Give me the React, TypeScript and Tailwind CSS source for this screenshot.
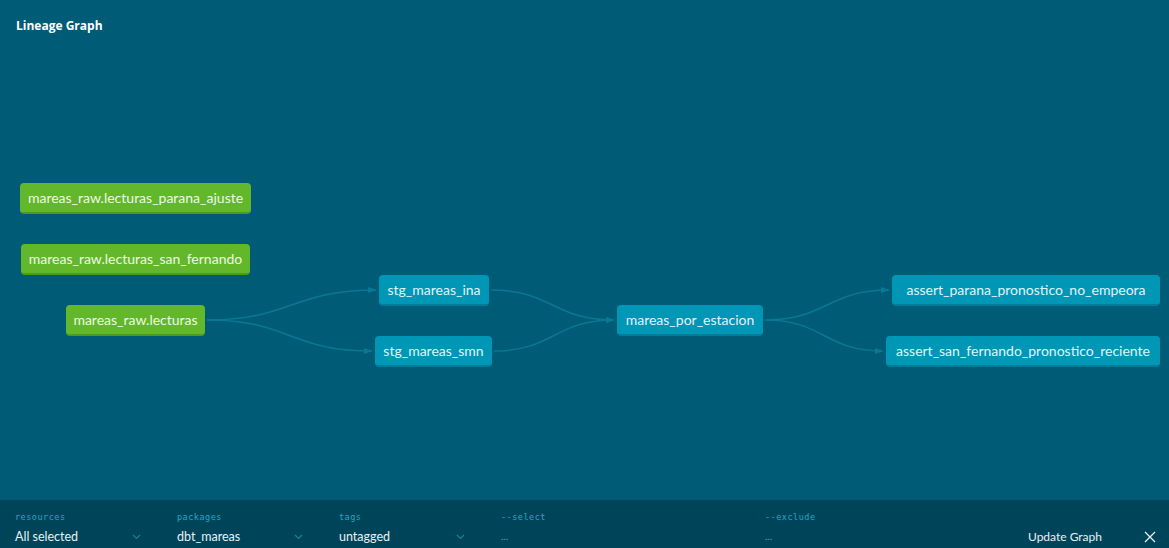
import React from "react";

type GraphNode = {
  id: string;
  label: string;
  x: number;
  y: number;
  w: number;
  kind: "source" | "model";
};

const NODES: GraphNode[] = [
  { id: "a", label: "mareas_raw.lecturas_parana_ajuste", x: 20, y: 183, w: 231, kind: "source" },
  { id: "b", label: "mareas_raw.lecturas_san_fernando", x: 21, y: 244, w: 229, kind: "source" },
  { id: "c", label: "mareas_raw.lecturas", x: 66, y: 305, w: 139, kind: "source" },
  { id: "d", label: "stg_mareas_ina", x: 379, y: 275, w: 110, kind: "model" },
  { id: "e", label: "stg_mareas_smn", x: 375, y: 336, w: 117, kind: "model" },
  { id: "f", label: "mareas_por_estacion", x: 617, y: 305, w: 146, kind: "model" },
  { id: "g", label: "assert_parana_pronostico_no_empeora", x: 892, y: 275, w: 268, kind: "model" },
  { id: "h", label: "assert_san_fernando_pronostico_reciente", x: 886, y: 336, w: 274, kind: "model" },
];

const EDGES: [string, string][] = [
  ["c", "d"],
  ["c", "e"],
  ["d", "f"],
  ["e", "f"],
  ["f", "g"],
  ["f", "h"],
];

const NODE_H = 30;

const byId = (id: string) => NODES.find((n) => n.id === id)!;

const Edges = () => (
  <svg className="absolute inset-0 h-full w-full" viewBox="0 0 1169 500" preserveAspectRatio="none">
    <defs>
      <marker id="arrow" viewBox="0 0 10 10" refX="9" refY="5" markerWidth="6" markerHeight="6" orient="auto">
        <path d="M0 1.5 L10 5 L0 8.5 z" fill="#0a7793" />
      </marker>
    </defs>
    {EDGES.map(([from, to]) => {
      const a = byId(from);
      const b = byId(to);
      const x1 = a.x + a.w + 2;
      const y1 = a.y + NODE_H / 2;
      const x2 = b.x - 3;
      const y2 = b.y + NODE_H / 2;
      const mx = (x1 + x2) / 2;
      return (
        <path
          key={from + to}
          d={`M${x1} ${y1} C${mx} ${y1} ${mx} ${y2} ${x2} ${y2}`}
          fill="none"
          stroke="#0a7793"
          strokeWidth="1.5"
          markerEnd="url(#arrow)"
        />
      );
    })}
  </svg>
);

const NodeBox = ({ node }: { node: GraphNode }) => (
  <div
    className={
      node.kind === "source"
        ? "absolute flex h-[31px] items-center justify-center whitespace-nowrap rounded-[4px] border-b-2 border-[#4d9a1e] bg-[#62b82a] text-[14px] text-[#eef7e6]"
        : "absolute flex h-[31px] items-center justify-center whitespace-nowrap rounded-[4px] border-b-2 border-[#007d99] bg-[#0096b6] text-[14px] text-[#e3f3f8]"
    }
    style={{ left: node.x, top: node.y, width: node.w }}
  >
    {node.label}
  </div>
);

const Chevron = () => (
  <svg width="9" height="6" viewBox="0 0 9 6" className="mt-[1px]">
    <path d="M1 1 L4.5 4.5 L8 1" fill="none" stroke="#1d7e95" strokeWidth="1.2" />
  </svg>
);

const FilterField = ({ label, value, width, dropdown = true }: { label: string; value: string; width: string; dropdown?: boolean }) => (
  <div className={`flex flex-col ${width}`}>
    <span className="font-['DejaVu_Sans_Mono',monospace] text-[8.5px] leading-none tracking-[0.5px] text-[#22a6c6]">{label}</span>
    <div className="mt-[9px] flex items-center justify-between pr-[36px]">
      <span className={dropdown ? "whitespace-nowrap text-[12.5px] leading-none text-[#e8f1f4]" : "text-[10px] leading-none text-[#4aa9c2]"}>{value}</span>
      {dropdown && <Chevron />}
    </div>
  </div>
);

export default function App() {
  return (
    <div className="flex h-[548px] w-[1169px] flex-col overflow-hidden bg-[#005b77] font-['Lato','Open_Sans',sans-serif]">
      <div className="relative h-[500px] w-full">
        <h1 className="absolute left-[16px] top-[17px] font-['Open_Sans',sans-serif] text-[12px] font-bold text-white">Lineage Graph</h1>
        <Edges />
        {NODES.map((n) => (
          <NodeBox key={n.id} node={n} />
        ))}
      </div>
      <div className="flex h-[48px] items-start bg-[#004459] pl-[15px] pt-[13px]">
        <FilterField label="resources" value="All selected" width="w-[162px]" />
        <FilterField label="packages" value="dbt_mareas" width="w-[162px]" />
        <FilterField label="tags" value="untagged" width="w-[162px]" />
        <FilterField label="--select" value="..." width="w-[264px]" dropdown={false} />
        <FilterField label="--exclude" value="..." width="w-[263px]" dropdown={false} />
        <div className="mt-[18px] flex items-center whitespace-nowrap">
          <span className="text-[12px] leading-none text-[#e8f1f4]">Update Graph</span>
          <svg width="12" height="12" viewBox="0 0 12 12" className="ml-[42px]">
            <path d="M1 1 L11 11 M11 1 L1 11" stroke="#e8f1f4" strokeWidth="1.3" />
          </svg>
        </div>
      </div>
    </div>
  );
}
